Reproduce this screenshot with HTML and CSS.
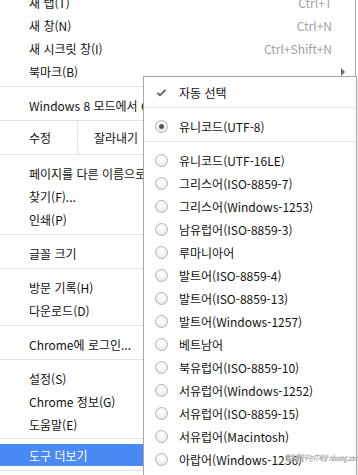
FILE: index.html
```html
<!DOCTYPE html>
<html lang="ko">
<head>
<meta charset="utf-8">
<title>Chrome menu</title>
<link rel="stylesheet" href="styles.css">
</head>
<body>
<div class="screen">
  <div class="menu">
    <div class="item"><span class="label">새 탭(T)</span><span class="accel">Ctrl+T</span></div>
    <div class="item"><span class="label">새 창(N)</span><span class="accel">Ctrl+N</span></div>
    <div class="item"><span class="label">새 시크릿 창(I)</span><span class="accel">Ctrl+Shift+N</span></div>
    <div class="item"><span class="label">북마크(B)</span><span class="arrow"></span></div>
    <div class="sep"></div>
    <div class="item"><span class="label">Windows 8 모드에서 Chrome 다시 실행</span></div>
    <div class="sep sep-top"></div>
    <div class="edit-row">
      <span class="edit-label">수정</span>
      <span class="edit-btn">잘라내기</span>
      <span class="edit-btn">복사</span>
      <span class="edit-btn">붙여넣기</span>
    </div>
    <div class="sep sep-bottom"></div>
    <div class="item"><span class="label">페이지를 다른 이름으로 저장...</span><span class="accel">Ctrl+S</span></div>
    <div class="item"><span class="label">찾기(F)...</span><span class="accel">Ctrl+F</span></div>
    <div class="item"><span class="label">인쇄(P)</span><span class="accel">Ctrl+P</span></div>
    <div class="sep"></div>
    <div class="item"><span class="label">글꼴 크기</span></div>
    <div class="sep"></div>
    <div class="item"><span class="label">방문 기록(H)</span><span class="accel">Ctrl+H</span></div>
    <div class="item"><span class="label">다운로드(D)</span><span class="accel">Ctrl+J</span></div>
    <div class="sep"></div>
    <div class="item"><span class="label">Chrome에 로그인...</span></div>
    <div class="sep"></div>
    <div class="item"><span class="label">설정(S)</span></div>
    <div class="item"><span class="label">Chrome 정보(G)</span></div>
    <div class="item"><span class="label">도움말(E)</span></div>
    <div class="sep sep-tight"></div>
    <div class="item item-active"><span class="label">도구 더보기</span></div>
    <div class="sep sep-last"></div>
    <div class="item"><span class="label">종료(X)</span></div>
  </div>

  <div class="submenu">
    <div class="sub-item">
      <span class="mark">
        <svg width="13" height="13" viewBox="0 0 13 13"><polyline points="2.5,6.8 5,9.3 10.5,3.8" fill="none" stroke="#5a5a5a" stroke-width="1.8"/></svg>
      </span>
      <span class="sub-label">자동 선택</span>
    </div>
    <div class="sub-sep"></div>
    <div class="sub-item"><span class="radio radio-on"></span><span class="sub-label">유니코드(UTF-8)</span></div>
    <div class="sub-sep"></div>
    <div class="sub-item"><span class="radio"></span><span class="sub-label">유니코드(UTF-16LE)</span></div>
    <div class="sub-item"><span class="radio"></span><span class="sub-label">그리스어(ISO-8859-7)</span></div>
    <div class="sub-item"><span class="radio"></span><span class="sub-label">그리스어(Windows-1253)</span></div>
    <div class="sub-item"><span class="radio"></span><span class="sub-label">남유럽어(ISO-8859-3)</span></div>
    <div class="sub-item"><span class="radio"></span><span class="sub-label">루마니아어</span></div>
    <div class="sub-item"><span class="radio"></span><span class="sub-label">발트어(ISO-8859-4)</span></div>
    <div class="sub-item"><span class="radio"></span><span class="sub-label">발트어(ISO-8859-13)</span></div>
    <div class="sub-item"><span class="radio"></span><span class="sub-label">발트어(Windows-1257)</span></div>
    <div class="sub-item"><span class="radio"></span><span class="sub-label">베트남어</span></div>
    <div class="sub-item"><span class="radio"></span><span class="sub-label">북유럽어(ISO-8859-10)</span></div>
    <div class="sub-item"><span class="radio"></span><span class="sub-label">서유럽어(Windows-1252)</span></div>
    <div class="sub-item"><span class="radio"></span><span class="sub-label">서유럽어(ISO-8859-15)</span></div>
    <div class="sub-item"><span class="radio"></span><span class="sub-label">서유럽어(Macintosh)</span></div>
    <div class="sub-item"><span class="radio"></span><span class="sub-label">아랍어(Windows-1256)</span></div>
    <div class="sub-item"><span class="radio"></span><span class="sub-label">아랍어(ISO-8859-6)</span></div>
  </div>

  <div class="watermark">행운을꿈꾸는IT세상 rdoong.com</div>
</div>
</body>
</html>
```

FILE: styles.css
```css
* { box-sizing: border-box; }

html, body {
  margin: 0;
  padding: 0;
  background: #ffffff;
}

body {
  font-family: "Noto Sans CJK KR", "Noto Sans", sans-serif;
  font-size: 12px;
  color: #111;
}

.screen {
  position: relative;
  width: 358px;
  height: 475px;
  overflow: hidden;
  background: #ffffff;
}

.menu {
  width: 356px;
  margin-top: -9px;
  background: #ffffff;
  border-right: 1px solid #a8a8a8;
}

.item {
  display: flex;
  align-items: center;
  justify-content: space-between;
  height: 23px;
  padding: 0 23px 0 29px;
  white-space: nowrap;
  overflow: hidden;
  line-height: 23px;
}

.label { color: #111; }

.accel {
  color: #a2a2a2;
}

.arrow {
  width: 0;
  height: 0;
  margin-right: -13px;
  border-top: 4px solid transparent;
  border-bottom: 4px solid transparent;
  border-left: 4px solid #6a6a6a;
}

.item-active {
  background: #4a8af4;
  height: 22px;
}

.item-active .label { color: #ffffff; }

.sep {
  height: 1px;
  background: #e3e3e3;
  margin: 3px 0 7px;
}

.sep-top { margin: 3px 0 0; }
.sep-bottom { margin: 0 0 7px; }
.sep-tight { margin: 2px 0 5px; }
.sep-last { margin: 4px 0 7px; }

.edit-row {
  display: flex;
  height: 33px;
  white-space: nowrap;
}

.edit-label {
  display: flex;
  align-items: center;
  width: 77px;
  padding-left: 29px;
}

.edit-btn {
  display: flex;
  align-items: center;
  padding: 0 16px;
  border-left: 1px solid #e3e3e3;
}

.submenu {
  position: absolute;
  left: 143px;
  top: 76px;
  width: 214px;
  height: 420px;
  padding-top: 4px;
  background: #ffffff;
  border: 1px solid #a8a8a8;
  box-shadow: 1px 1px 2px rgba(0, 0, 0, 0.12);
}

.sub-item {
  display: flex;
  align-items: center;
  height: 23px;
  padding-left: 11px;
  gap: 11px;
  white-space: nowrap;
  line-height: 23px;
}

.mark {
  display: flex;
  width: 13px;
  height: 13px;
  margin-top: -1px;
}

.sub-label { color: #111; }

.sub-sep {
  height: 1px;
  background: #e6e6e6;
  margin: 3px 0 7px;
}

.radio {
  position: relative;
  flex: none;
  width: 13px;
  height: 13px;
  border-radius: 50%;
  border: 1px solid #b4b4b4;
  background: radial-gradient(circle at 50% 35%, #ffffff 0%, #f4f4f4 45%, #dedede 100%);
}

.radio-on::after {
  content: "";
  position: absolute;
  left: 3px;
  top: 3px;
  width: 5px;
  height: 5px;
  border-radius: 50%;
  background: #555555;
}

.watermark {
  position: absolute;
  left: 285px;
  top: 452px;
  font-size: 8px;
  font-weight: bold;
  font-style: italic;
  color: rgba(135, 135, 135, 0.75);
  text-shadow: 0 0 1px #ffffff;
  white-space: nowrap;
  letter-spacing: -0.4px;
  transform: scaleX(0.68);
  transform-origin: left center;
}
```
